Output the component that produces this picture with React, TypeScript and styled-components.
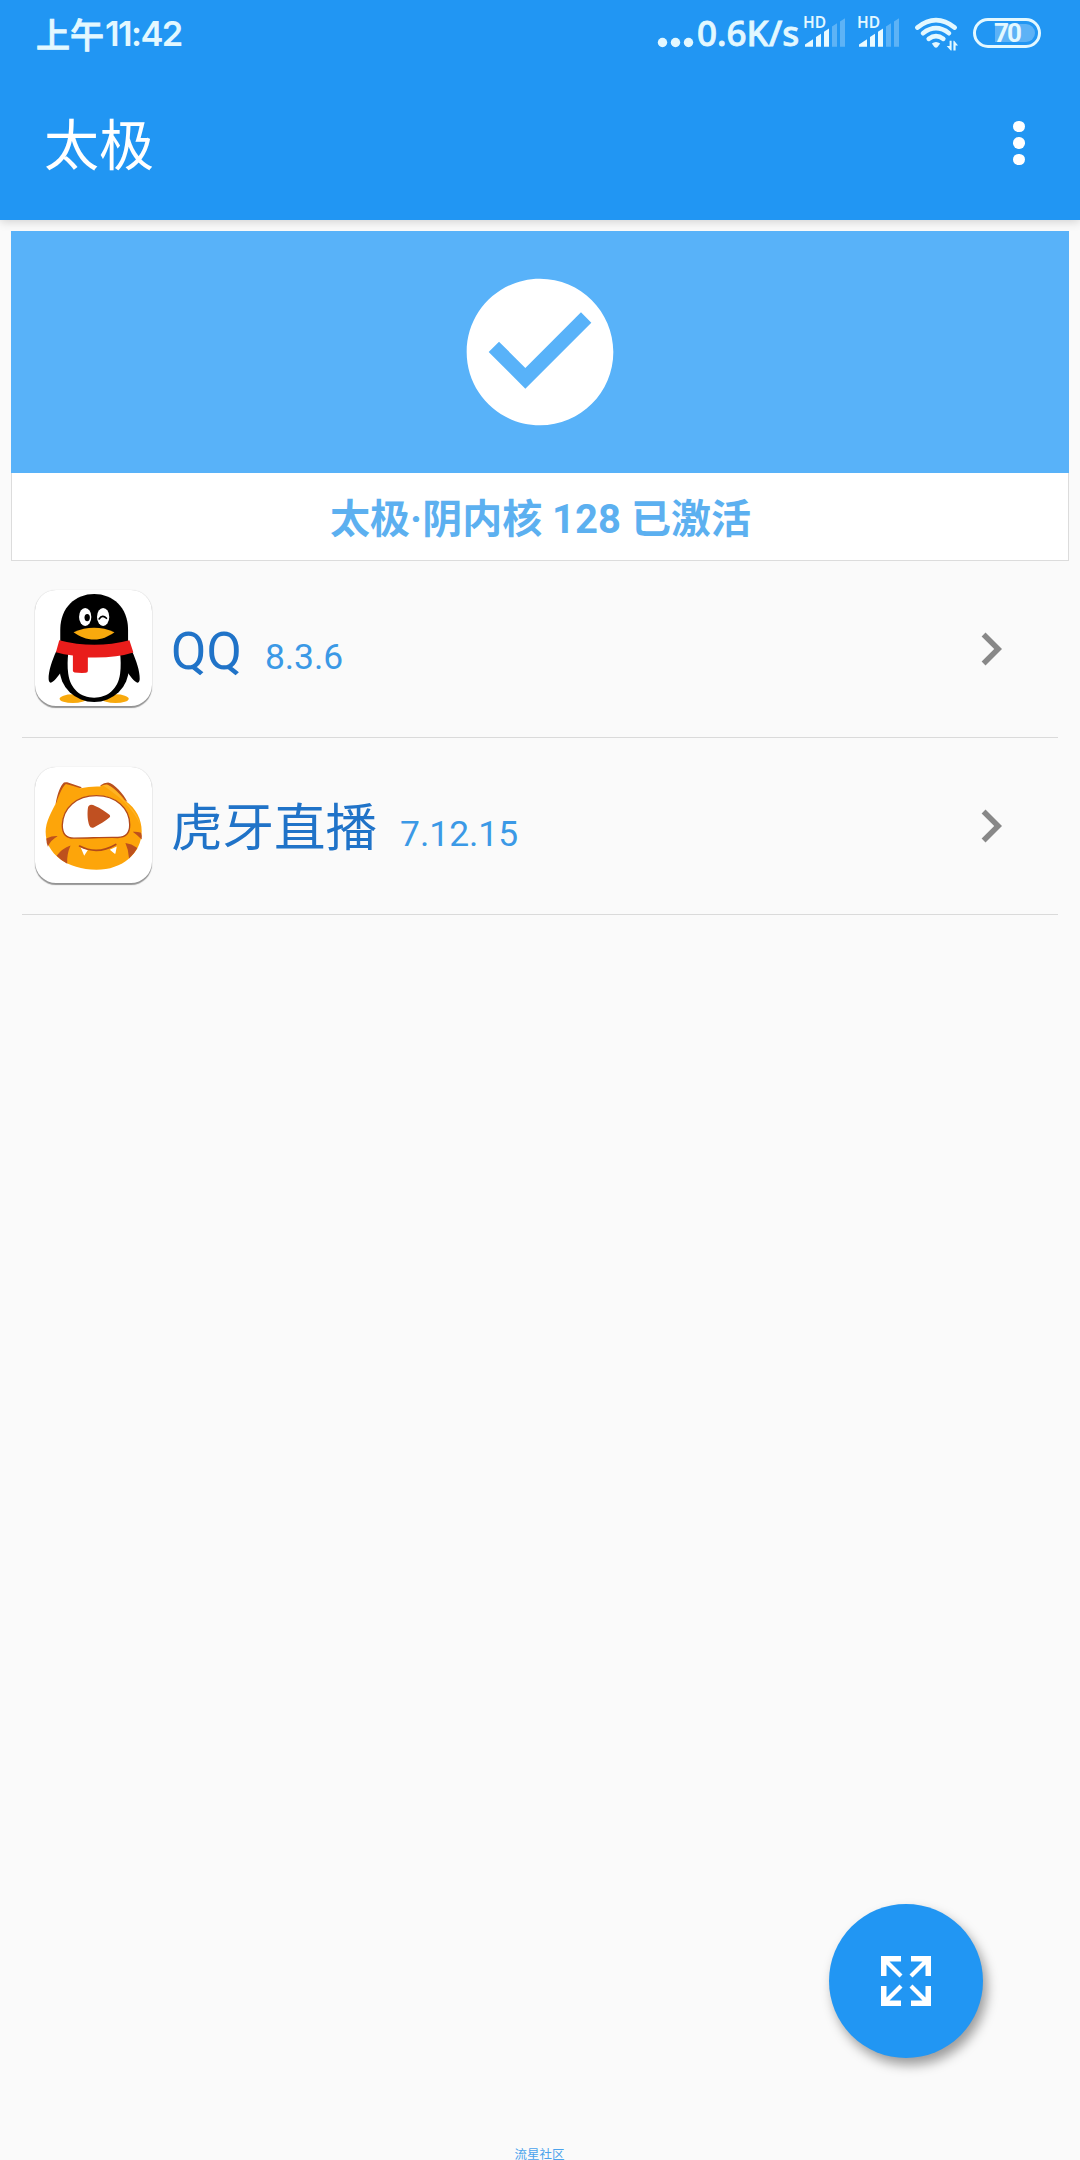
import styled, { createGlobalStyle } from "styled-components";

const apps = [
  { id: 0, name: "QQ", version: "8.3.6", icon: <PenguinIcon /> },
  { id: 1, name: "虎牙直播", version: "7.12.15", icon: <TigerIcon /> },
];

export default function App() {
  return (
    <>
      <GlobalStyle />
      <Screen>
        <Header>
          <StatusBar>
            <Clock>
              上午<ClockDigits>11:42</ClockDigits>
            </Clock>
            <StatusIcons>
              <LoadingDots />
              <NetSpeed>0.6K/s</NetSpeed>
              <Signal />
              <Signal />
              <Wifi />
              <Battery>
                <BatteryLevel />
                <BatteryText>70</BatteryText>
              </Battery>
            </StatusIcons>
          </StatusBar>
          <Toolbar>
            <Title>太极</Title>
            <MenuButton type="button" aria-label="menu">
              <MenuDot />
              <MenuDot />
              <MenuDot />
            </MenuButton>
          </Toolbar>
        </Header>
        <Card>
          <Banner>
            <svg width="176" height="176" viewBox="0 0 24 24" fill="#fff">
              <path d="M12 2C6.48 2 2 6.48 2 12s4.48 10 10 10 10-4.48 10-10S17.52 2 12 2zm-2 15l-5-5 1.41-1.41L10 14.17l7.59-7.59L19 8l-9 9z" />
            </svg>
          </Banner>
          <CardText>太极·阴内核 128 已激活</CardText>
        </Card>
        <List>
          {apps.map((app) => (
            <Row key={app.id}>
              <Tile>{app.icon}</Tile>
              <Name>{app.name}</Name>
              <Version>{app.version}</Version>
              <Chevron width="66" height="66" viewBox="0 0 24 24">
                <path d="M10 6L8.59 7.41 13.17 12l-4.58 4.59L10 18l6-6z" />
              </Chevron>
            </Row>
          ))}
        </List>
        <Footer>流星社区</Footer>
        <Fab type="button" aria-label="expand">
          <ExpandIcon />
        </Fab>
      </Screen>
    </>
  );
}

function LoadingDots() {
  return (
    <svg width="40" height="66" viewBox="657 0 40 66" fill="#e3f8ff">
      <circle cx="662.5" cy="42.5" r="4.7" />
      <circle cx="675.5" cy="42.5" r="4.7" />
      <circle cx="688.5" cy="42.5" r="4.7" />
    </svg>
  );
}

function Signal() {
  return (
    <SignalBox>
      <Hd>HD</Hd>
      <svg width="42" height="30" viewBox="0 0 42 30" fill="#e9faff">
        <path d="M1 29.7v-2.2l8-5.2v7.4z" />
        <path d="M12 29.7V20l5-3.3v13z" />
        <path d="M20 29.7V14.8l5-3.2v18.1z" />
        <path d="M28 29.7V9.6l5-3.3v23.4z" opacity=".3" />
        <path d="M36 29.7V4.4l5-3.2v28.5z" opacity=".3" />
      </svg>
    </SignalBox>
  );
}

function Wifi() {
  return (
    <WifiSvg width="46" height="66" viewBox="914 0 46 66">
      <g fill="none" stroke="#e3f8ff" strokeWidth="4.6" strokeLinecap="round">
        <path d="M917.3 27.6Q936 12.8 954.7 27.6" />
        <path d="M923 33.2Q936 23.2 949 33.2" />
        <path d="M928.7 38.8Q936 33.4 943.3 38.8" />
      </g>
      <path
        d="M931.8 43.6Q936 40.4 940.2 43.6L937.6 47Q936 48.6 934.4 47z"
        fill="#e3f8ff"
      />
      <path
        d="M949.6 40.8h2v9.8h-.9l-4-4.6h2.9zM953.4 50.6v-9.8h.8l3.8 4.6h-2.4v5.2z"
        fill="#e3f8ff"
      />
    </WifiSvg>
  );
}

function ExpandIcon() {
  const arrow = "M0 0h20v5.5H8.5l13 13-3 3-13-13V20H0z";
  return (
    <svg width="50" height="50" viewBox="0 0 50 50" fill="#fff">
      <path d={arrow} />
      <path d={arrow} transform="matrix(-1 0 0 1 50 0)" />
      <path d={arrow} transform="matrix(1 0 0 -1 0 50)" />
      <path d={arrow} transform="matrix(-1 0 0 -1 50 50)" />
    </svg>
  );
}

function PenguinIcon() {
  return (
    <svg width="117" height="117" viewBox="46 60 352 352">
      <ellipse cx="160" cy="387" rx="40" ry="13" fill="#f8a90d" />
      <ellipse cx="288" cy="387" rx="40" ry="13" fill="#f8a90d" />
      <path
        d="M110 244C98 270 86 304 87 328c1 16 10 18 38-22l12-62zM338 244c12 26 24 60 23 84-1 16-10 18-38-22l-12-62z"
        fill="#000"
      />
      <ellipse cx="224" cy="297" rx="104" ry="100" fill="#000" />
      <path
        d="M146 250h156c2 18 3 40 0 62-6 46-38 72-78 72s-72-26-78-72c-3-22-2-44 0-62z"
        fill="#fff"
      />
      <path
        d="M122 222V180C122 112 168 72 224 72s102 40 102 108v42z"
        fill="#000"
      />
      <path
        d="M119 211q105 28 211 0l12 37q-56 18-137 15v41q0 5-6 5-18 1-34-1-5-1-5-5v-46q-28-3-51-10z"
        fill="#e91d1b"
      />
      <ellipse cx="197" cy="141" rx="18.500" ry="27" fill="#fff" />
      <ellipse cx="251" cy="141" rx="18.500" ry="27" fill="#fff" />
      <ellipse cx="203" cy="143" rx="8" ry="11" fill="#000" />
      <path
        d="M239 147q10-14 22-2"
        fill="none"
        stroke="#000"
        strokeWidth="5"
        strokeLinecap="round"
      />
      <path
        d="M162 187q62-27 123 0c-20 14-38 22-61 22s-44-9-62-22z"
        fill="#f8a90d"
      />
    </svg>
  );
}

function TigerIcon() {
  return (
    <svg width="117" height="117" viewBox="46 51 352 352">
      <path
        d="M108 162C114 130 122 108 133 98q4-2 10-1l44 15zM242 107q12-9 24-9c18 3 46 34 58 58z"
        fill="#b9501c"
      />
      <path
        d="M111 156C120 130 130 108 139 102q24 6 44 13 28-6 58-5 12-7 22-6c18 8 38 26 54 48 34 24 50 58 50 92 0 66-58 116-136 116-88 0-153-48-153-114 0-30 18-62 33-90z"
        fill="#fda50a"
      />
      <path
        d="M250 106q10-3 16-1c20 12 40 32 50 49 24 22 40 44 46 70-20-50-70-90-112-118z"
        fill="#ffbd36"
        opacity=".6"
      />
      <path
        d="M128 226c2-52 42-89 103-89 58 0 100 38 100 88 0 26-12 38-36 38-46-1-84 2-132 2-24 0-35-16-35-39z"
        fill="#fff"
        stroke="#b34a1a"
        strokeWidth="4"
      />
      <path
        d="M205 176c1-12 10-14 22-8 16 7 30 16 42 26q6 5 0 10c-12 10-28 20-46 29q-10 3-13-5c-6-14-7-36-5-52z"
        fill="#c05021"
      />
      <path
        d="M80 266q18-8 34-7-22 12-29 32-5-12-5-25zM111 318q16-22 42-31-12 26-10 55-18-9-32-24zM340 246q14-1 25 3 3 7 2 20-12-12-27-23zM318 280q18 2 36 15-8 16-25 31-1-24-11-46z"
        fill="#bd511d"
      />
      <path d="M183 292l22 9-11 17zM271 300l21-10-4 21q-2 2-5-1z" fill="#fff" />
      <path
        d="M180 289q54 28 109-5"
        fill="none"
        stroke="#b34a1a"
        strokeWidth="5"
        strokeLinecap="round"
      />
    </svg>
  );
}

const GlobalStyle = createGlobalStyle`
  * {
    box-sizing: border-box;
  }
  body {
    margin: 0;
    background: #fafafa;
    font-family: Roboto, "Noto Sans CJK SC", sans-serif;
  }
  svg {
    display: block;
    flex-shrink: 0;
  }
  button {
    border: 0;
    padding: 0;
    cursor: pointer;
  }
`;

const Screen = styled.div`
  position: relative;
  display: flex;
  flex-direction: column;
  width: 1080px;
  height: 2160px;
  overflow: hidden;
`;

const Header = styled.header`
  height: 220px;
  background: #2196f3;
  box-shadow: 0 2px 9px rgba(0, 0, 0, 0.16);
`;

const StatusBar = styled.div`
  display: flex;
  justify-content: space-between;
  height: 66px;
  padding: 0 39px 0 36px;
  color: #e3f8ff;
`;

const Clock = styled.div`
  display: flex;
  align-items: center;
  height: 68px;
  font: 500 34px/68px "Noto Sans CJK SC", sans-serif;
  -webkit-text-stroke: 0.9px #e3f8ff;
`;

const ClockDigits = styled.span`
  margin-left: 1px;
  font: 600 34.500px/68px Inter, sans-serif;
  letter-spacing: -1.6px;
  -webkit-text-stroke: 0;
`;

const StatusIcons = styled.div`
  display: flex;
`;

const NetSpeed = styled.span`
  width: 106px;
  font: 500 35px/66px "Noto Sans", sans-serif;
  white-space: nowrap;
  -webkit-text-stroke: 0.8px #e3f8ff;
`;

const SignalBox = styled.div`
  position: relative;
  width: 54px;
  padding: 17px 0 0 1px;
`;

const Hd = styled.span`
  position: absolute;
  top: 14px;
  left: 0;
  font: 600 15.500px/16px "Noto Sans", sans-serif;
`;

const WifiSvg = styled.svg`
  margin-left: 3px;
`;

const Battery = styled.div`
  position: relative;
  width: 68px;
  height: 30px;
  margin: 18px 0 0 13px;
  border: 3px solid #e3f8ff;
  border-radius: 15px;
`;

const BatteryLevel = styled.div`
  width: 40px;
  height: 18px;
  margin: 3px 0 0 19px;
  border-radius: 0 9px 9px 0;
  background: rgba(255, 255, 255, 0.27);
`;

const BatteryText = styled.span`
  position: absolute;
  inset: 0;
  font: 700 26px/25px Roboto, sans-serif;
  letter-spacing: -1.8px;
  text-align: center;
`;

const Toolbar = styled.div`
  display: flex;
  justify-content: space-between;
  align-items: center;
  height: 154px;
  padding: 0 45px 0 44px;
`;

const Title = styled.h1`
  margin: 6px 0 0;
  color: #fff;
  font-size: 55px;
  font-weight: 400;
  line-height: 80px;
`;

const MenuButton = styled.button`
  display: flex;
  flex-direction: column;
  align-items: center;
  gap: 5px;
  width: 32px;
  background: none;
`;

const MenuDot = styled.span`
  width: 11.500px;
  height: 11.500px;
  border-radius: 50%;
  background: #fff;
`;

const Card = styled.section`
  margin: 11px 11px 0;
`;

const Banner = styled.div`
  display: flex;
  justify-content: center;
  align-items: center;
  height: 242px;
  background: #58b2f9;
`;

const CardText = styled.div`
  height: 88px;
  padding-left: 1px;
  border: 1px solid #dcdcdc;
  border-top: 0;
  background: #fff;
  color: #5cb0f0;
  font-size: 40px;
  font-weight: 700;
  line-height: 93px;
  text-align: center;
`;

const List = styled.div`
  flex: 1;
  padding: 0 22px;
`;

const Row = styled.div`
  display: flex;
  align-items: center;
  height: 177px;
  padding: 0 34px 0 13px;
  border-bottom: 1px solid #dadada;
`;

const Tile = styled.div`
  width: 117px;
  height: 116px;
  margin: 0 19px 2px 0;
  border-radius: 21px;
  background: #fff;
  box-shadow: 0 1.500px 1px rgba(0, 0, 0, 0.4), 0 0 1px rgba(0, 0, 0, 0.2);
`;

const Name = styled.span`
  margin-top: 5px;
  color: #2073c8;
  font-size: 51.500px;
  line-height: 76px;
`;

const Version = styled.span`
  margin: 15px 0 0 23px;
  color: #3b99e6;
  font-size: 35.400px;
  line-height: 48px;
`;

const Chevron = styled.svg`
  margin-left: auto;
  fill: #888;
`;

const Footer = styled.footer`
  height: 13px;
  padding-right: 1px;
  color: #4ba3ec;
  font: 400 12.500px/13px "Noto Sans CJK SC", sans-serif;
  text-align: center;
`;

const Fab = styled.button`
  position: absolute;
  right: 97px;
  bottom: 102px;
  display: flex;
  justify-content: center;
  align-items: center;
  width: 154px;
  height: 154px;
  border-radius: 50%;
  background: #2196f3;
  box-shadow: 4px 7px 12px rgba(0, 0, 0, 0.38);
`;
